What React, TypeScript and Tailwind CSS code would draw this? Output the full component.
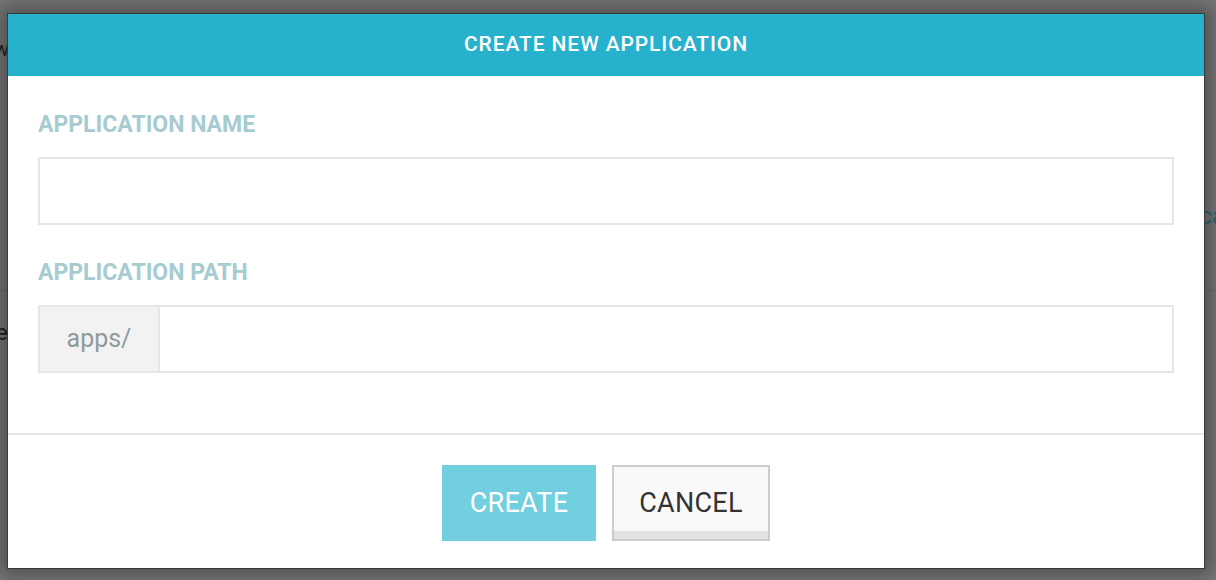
import React from "react";

const font = { fontFamily: "Roboto, 'Noto Sans', sans-serif" };

function FieldLabel({ children }: { children: React.ReactNode }) {
  return (
    <div className="text-[23px] leading-[24px] font-bold text-[#a6cbd1] mb-[20px]">
      {children}
    </div>
  );
}

export default function App() {
  return (
    <div className="relative w-[1216px] h-[580px] overflow-hidden bg-[#777777]" style={font}>
      {/* dimmed page behind the dialog */}
      <span className="absolute left-[-6px] top-[34px] text-[20px] text-[#1e1e1e]">w</span>
      <span className="absolute left-[1200px] top-[200px] text-[23px] text-[#2b6a7b]">ca</span>
      <span className="absolute left-[-4px] top-[316px] text-[22px] text-[#1e1e1e]">e</span>
      <div className="absolute left-0 right-0 top-[290px] h-px bg-[#6c6c6c]" />

      {/* dialog */}
      <div className="absolute left-[7px] top-[13px] w-[1198px] h-[556px] border border-[#3a3a3a] bg-white shadow-[0_0_18px_6px_rgba(0,0,0,0.35)] flex flex-col">
        <div className="h-[62px] bg-[#27b1cd] flex items-center justify-center text-white text-[21px] font-medium tracking-[0.9px]">
          CREATE NEW APPLICATION
        </div>

        <div className="px-[30px] pt-[37px] pb-[60px]">
          <FieldLabel>APPLICATION NAME</FieldLabel>
          <div className="h-[68px] border-2 border-[#e6e6e6] bg-white" />

          <div className="mt-[36px]">
            <FieldLabel>APPLICATION PATH</FieldLabel>
          </div>
          <div className="h-[68px] border-2 border-[#e6e6e6] bg-white flex">
            <div className="w-[120px] bg-[#f2f2f2] border-r-2 border-[#e6e6e6] flex items-center justify-center text-[25px] text-[#8e9b9d]">
              apps/
            </div>
            <div className="flex-1" />
          </div>
        </div>

        <div className="h-[2px] bg-[#e6e6e6]" />

        <div className="flex-1 flex justify-center gap-[16px] pt-[30px]">
          <button className="w-[154px] h-[76px] bg-[#72cfe0] text-white text-[27px] tracking-[0.3px]">
            CREATE
          </button>
          <button className="w-[158px] h-[76px] bg-[#f9f9f9] border-2 border-[#cccccc] text-[#333333] text-[27px] tracking-[0.3px] relative">
            CANCEL
            <span className="absolute left-0 right-0 bottom-0 h-[8px] bg-[#e2e2e2]" />
          </button>
        </div>
      </div>
    </div>
  );
}
